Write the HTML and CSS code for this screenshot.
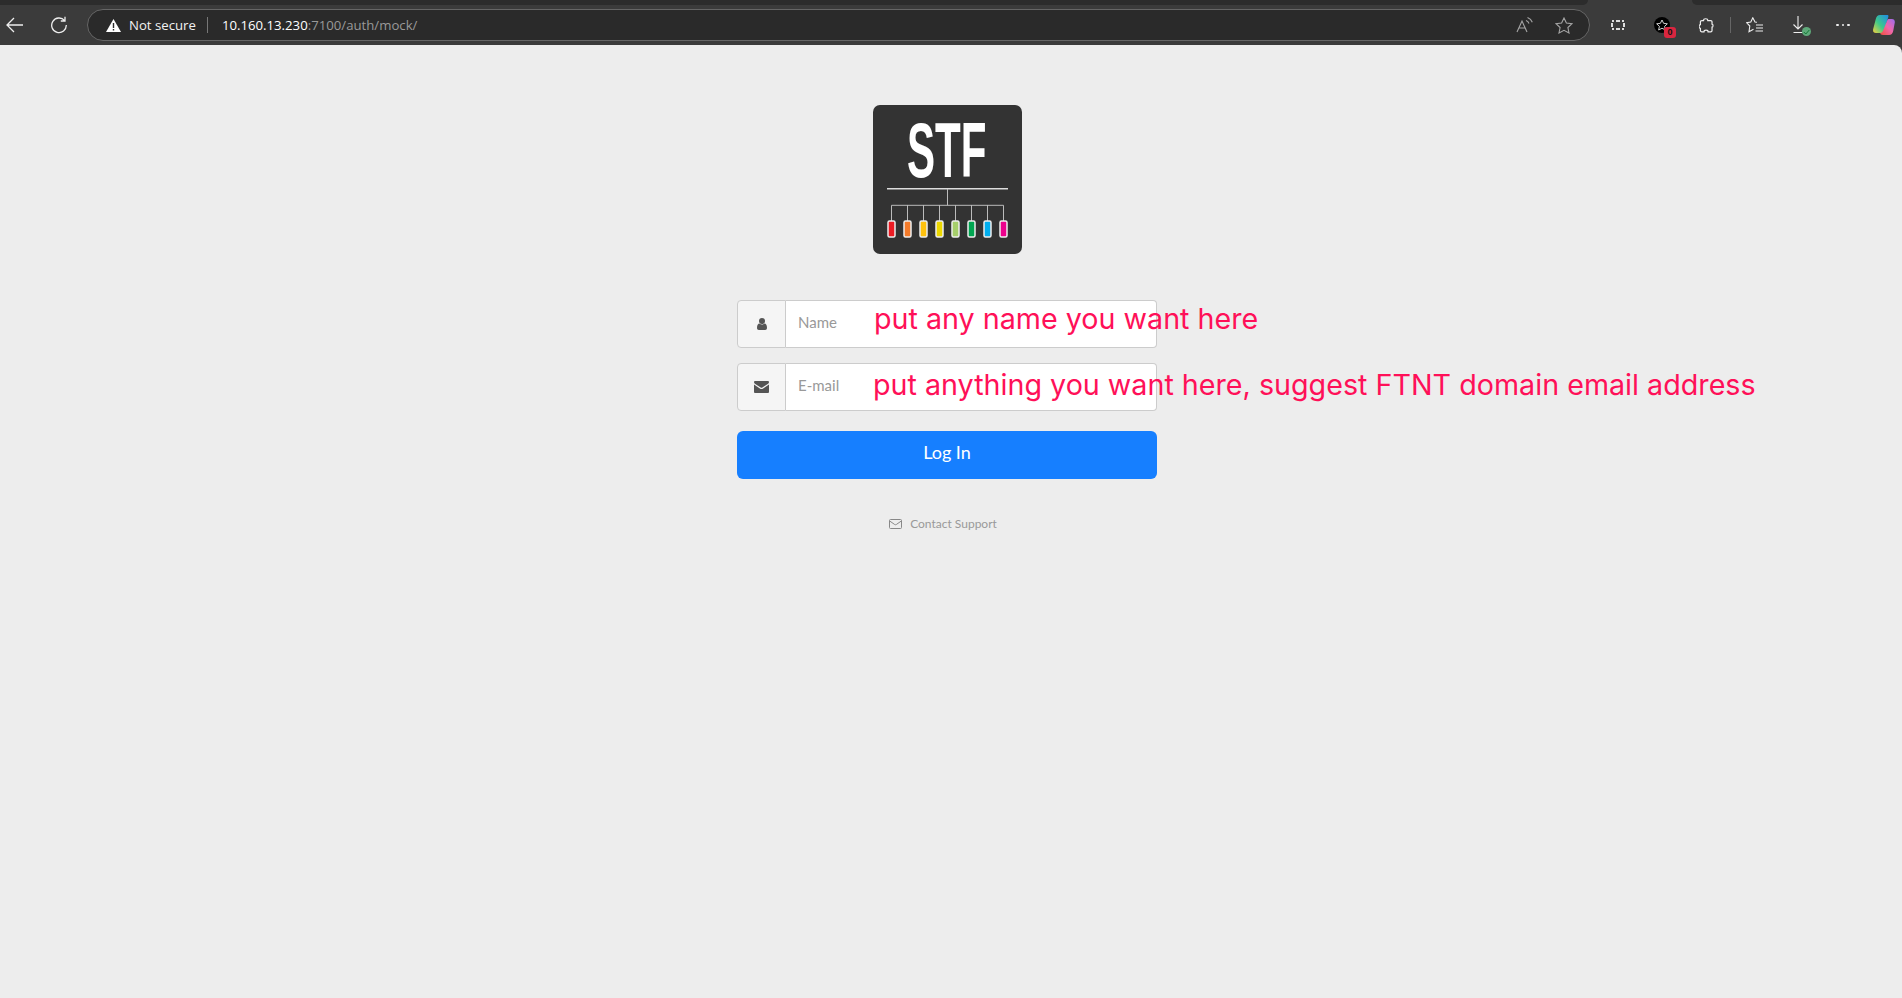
FILE: index.html
```html
<!DOCTYPE html>
<html lang="en">
<head>
<meta charset="utf-8">
<title>STF Login</title>
<link rel="stylesheet" href="styles.css">
</head>
<body>
<header class="chrome">
  <div class="tabstrip"><div class="strip-left"></div><div class="strip-gap"></div><div class="strip-right"></div></div>
  <div class="toolbar">
    <span class="tool tool-back"><svg width="18" height="16" viewBox="0 0 18 16"><path d="M8 1 1 8l7 7M1 8h16" class="ln"/></svg></span>
    <span class="tool tool-reload"><svg width="18" height="18" viewBox="0 0 18 18"><path d="M14.600 4.600A7.300 7.300 0 1 0 16.300 9M15 .8v4.200h-4.200" class="ln"/></svg></span>
    <div class="address">
      <svg class="warn" width="15" height="13" viewBox="0 0 15 13"><path d="M7.500 0 15 13H0z" fill="#fff"/><path d="M6.800 4h1.400v5H6.800zM6.800 10h1.400v1.500H6.800z" fill="#2a2a2a"/></svg>
      <span class="secure">Not secure</span>
      <span class="addr-sep"></span>
      <span class="url"><b>10.160.13.230</b>:7100/auth/mock/</span>
      <span class="addr-tools">
        <svg width="18" height="16" viewBox="0 0 18 16"><path d="M1 15 6 4l5 11M2.800 11h6.400M10 3.500c1.500.5 2.500 1.500 3 3M11.500 .5c2.300.8 4 2.500 4.800 4.800" class="ln thin dim"/></svg>
        <svg width="18" height="17" viewBox="0 0 18 17"><path d="m9 1 2.400 5 5.600.7-4.100 3.800 1.100 5.500L9 13.300 4 16l1.100-5.500L1 6.700 6.600 6z" class="ln thin dim"/></svg>
      </span>
    </div>
    <span class="tool t-tab"><svg width="14" height="10" viewBox="0 0 14 10"><path d="M1 0h2v2H1zM5 0h4v2H5zM11 0h2v2h-2zM0 3h2v4H0zM12 3h2v4h-2zM1 8h2v2H1zM5 8h4v2H5zM11 8h2v2h-2z" fill="#ddd"/></svg></span>
    <span class="tool t-ext">
      <span class="ext-disc"><svg width="12" height="12" viewBox="0 0 18 17"><path d="m9 1 2.400 5 5.600.7-4.100 3.800 1.100 5.500L9 13.300 4 16l1.100-5.500L1 6.700 6.600 6z" class="ln"/></svg></span>
      <span class="ext-badge">0</span>
    </span>
    <span class="tool t-puzzle"><svg width="15" height="15" viewBox="0 0 16 16"><path d="M4.800 2.800C4.800 1.500 5.900.8 7.100.8s2.300.7 2.300 2h3.200c.8 0 1.300.6 1.300 1.300v2.400c1.400 0 1.400 3.300 0 3.300v3.500c0 .8-.6 1.400-1.400 1.400h-2.800c0-2.300-4.400-2.300-4.400 0H3c-.9 0-1.500-.6-1.500-1.400v-2.200C-.4 10.800-.4 7 1.500 7V4.200c0-.8.600-1.400 1.500-1.400z" class="ln"/></svg></span>
    <span class="tool-sep"></span>
    <span class="tool t-fav"><svg width="18" height="16" viewBox="0 0 18 16"><path d="M11 5.300 9 5 6.800.8 4.800 5 .6 5.700 3.800 9 3 14.800l4.500-2.600M10 8h7M10 11h7M9.500 14h7.500" class="ln thin"/></svg></span>
    <span class="tool t-down"><svg width="12" height="18" viewBox="0 0 12 18"><path d="M6 0v13M1.500 8.500 6 13l4.500-4.500M1.500 16.500h9" class="ln thin"/></svg><span class="down-ok"><svg width="7" height="6" viewBox="0 0 7 6"><path d="m.8 3 2 2 3.500-4" class="tick"/></svg></span></span>
    <span class="tool t-more"><i></i><i></i><i></i></span>
    <span class="tool t-copilot"><svg width="22" height="20" viewBox="0 0 22 20">
      <defs>
        <linearGradient id="cpa" x1="0" y1="1" x2="1" y2="0"><stop offset="0" stop-color="#f4d03f"/><stop offset=".45" stop-color="#3ec98a"/><stop offset="1" stop-color="#1e8be8"/></linearGradient>
        <linearGradient id="cpb" x1="0" y1="1" x2="1" y2="0"><stop offset="0" stop-color="#f0503c"/><stop offset=".5" stop-color="#f067a8"/><stop offset="1" stop-color="#9a6bf0"/></linearGradient>
      </defs>
      <path d="M7 0h7c2 0 1.500 1.500 1 3L11 16c-.6 1.800-2 2-3.500 2H3c-2.500 0-3.300-1.800-2.800-4L2.800 4C3.500 1.500 4.800 0 7 0z" fill="url(#cpa)"/>
      <path d="M10 20h6c2.500 0 3.500-1.500 4.200-4l1.500-8c.5-2.300-.5-4-2.800-4H16c-1 0-1.500.5-1.800 1.500L10.300 15c-.7 2-1.500 3-3 3 0 1 1 2 2.700 2z" fill="url(#cpb)"/>
    </svg></span>
  </div>
</header>
<main class="page">
  <div class="login">
    <svg class="logo" width="149" height="149" viewBox="0 0 149 149">
      <rect width="149" height="149" rx="7" fill="#333"/>
      <text transform="translate(34 71.500) scale(.54 1)" class="logo-text">STF</text>
      <path d="M14 83.700h121" stroke="#ddd" stroke-width="1.500" fill="none"/>
      <path d="M74.500 84v16.300M18.500 116v-15.700h112V116M34.500 100v16M50.500 100v16M66.500 100v16M82.500 100v16M98.500 100v16M114.500 100v16" stroke="#bbb" fill="none"/>
      <g stroke="#eee" stroke-width="1.500">
        <rect x="15" y="116" width="7" height="16" rx="1.500" fill="#ed1c24"/>
        <rect x="31" y="116" width="7" height="16" rx="1.500" fill="#f47b2a"/>
        <rect x="47" y="116" width="7" height="16" rx="1.500" fill="#ffc20e"/>
        <rect x="63" y="116" width="7" height="16" rx="1.500" fill="#ecd800"/>
        <rect x="79" y="116" width="7" height="16" rx="1.500" fill="#a6ce6b"/>
        <rect x="95" y="116" width="7" height="16" rx="1.500" fill="#00a651"/>
        <rect x="111" y="116" width="7" height="16" rx="1.500" fill="#00aeef"/>
        <rect x="127" y="116" width="7" height="16" rx="1.500" fill="#ec008c"/>
      </g>
    </svg>
    <form class="login-form">
      <div class="group">
        <span class="addon"><svg width="10" height="12" viewBox="0 0 10 12"><circle cx="5" cy="3" r="3" fill="#555"/><path d="M0 10c0-3 1-4.500 2.500-4.500C3.300 6.200 4 6.500 5 6.500s1.700-.3 2.500-1C9 5.500 10 7 10 10c0 1.200-.8 2-1.800 2H1.800C.8 12 0 11.200 0 10z" fill="#555"/></svg></span>
        <input class="field" type="text" placeholder="Name">
        <span class="note note-name">put any name you want here</span>
      </div>
      <div class="group">
        <span class="addon"><svg width="15" height="12" viewBox="0 0 15 12"><path d="M1.200 0h12.600C14.500 0 15 .5 15 1.200c0 .6-.4 1.100-.9 1.500L8.300 6.600c-.5.300-1.100.3-1.600 0L.9 2.700C.4 2.300 0 1.800 0 1.200 0 .5.500 0 1.200 0zM0 3.600l6.200 4.100c.8.500 1.800.5 2.600 0L15 3.600v7.100c0 .7-.5 1.300-1.200 1.300H1.200C.5 12 0 11.400 0 10.700z" fill="#555"/></svg></span>
        <input class="field" type="text" placeholder="E-mail">
        <span class="note note-mail">put anything you want here, suggest FTNT domain email address</span>
      </div>
      <button class="login-btn" type="button">Log In</button>
    </form>
    <a class="contact"><svg width="13" height="10" viewBox="0 0 13 10"><path d="M1.500.5h10a1 1 0 0 1 1 1v7a1 1 0 0 1-1 1h-10a1 1 0 0 1-1-1v-7a1 1 0 0 1 1-1zM.7 2l5 3.500a1.500 1.500 0 0 0 1.600 0l5-3.500" fill="none" stroke="#888"/></svg>Contact Support</a>
  </div>
</main>
</body>
</html>
```
FILE: styles.css
```css
* { box-sizing: border-box; }
html, body { margin: 0; height: 100%; }
body {
  background: #3b3b3b;
  font-family: Lato, "Open Sans", sans-serif;
  overflow: hidden;
  display: flex;
  flex-direction: column;
}
.chrome { height: 45px; flex: none; background: #3b3b3b; }
.tabstrip { display: flex; height: 5px; }
.strip-left { width: 1588px; background: #2c2c2c; border-bottom-right-radius: 6px; }
.strip-gap { width: 104px; }
.strip-right { flex: 1; background: #2c2c2c; border-bottom-left-radius: 6px; }
.toolbar { display: flex; align-items: center; height: 40px; }
.tool { display: flex; align-items: center; justify-content: center; flex: none; height: 32px; }
.ln { fill: none; stroke: #eee; stroke-width: 1.300; }
.ln.thin { stroke-width: 1.100; }
.ln.dim { stroke: #a5a5a5; }
.tool-back { width: 30px; }
.tool-reload { width: 48px; margin-left: 3px; padding-left: 17px; justify-content: flex-start; }
.address {
  display: flex;
  flex: none;
  align-items: center;
  width: 1503px;
  height: 32px;
  margin-left: 6px;
  padding: 0 16px 0 18px;
  background: #2a2a2a;
  border: 1px solid #666;
  border-radius: 16px;
  font-family: "Open Sans", sans-serif;
  font-size: 13.200px;
}
.warn { flex: none; }
.secure { color: #f2f2f2; margin-left: 8px; }
.addr-sep { width: 1px; height: 16px; background: #777; margin: 0 14px 0 11px; }
.url { color: #999; }
.url b { color: #fff; font-weight: 400; }
.addr-tools { margin-left: auto; display: flex; gap: 21px; align-items: center; }
.t-tab { width: 56px; }
.t-ext { width: 32px; position: relative; }
.ext-disc { width: 16px; height: 16px; border-radius: 50%; background: #000; display: flex; align-items: center; justify-content: center; }
.ext-badge {
  position: absolute;
  left: 18px;
  top: 18px;
  width: 12px;
  height: 11px;
  border-radius: 3px;
  background: #d9263f;
  color: #111;
  font: 700 9px/11px "Liberation Sans", sans-serif;
  text-align: center;
}
.t-puzzle { width: 32px; margin-left: 12px; }
.tool-sep { width: 1px; height: 16px; background: #666; margin-left: 8px; flex: none; }
.t-fav { width: 32px; margin-left: 8px; }
.t-down { width: 32px; margin-left: 11px; position: relative; }
.down-ok {
  position: absolute;
  left: 20px;
  top: 18px;
  width: 9px;
  height: 9px;
  border-radius: 50%;
  background: #5fa97a;
  display: flex;
  align-items: center;
  justify-content: center;
}
.tick { fill: none; stroke: #173; stroke-width: 1; }
.t-more { width: 32px; margin-left: 13px; gap: 3px; }
.t-more i { width: 2.500px; height: 2.500px; border-radius: 50%; background: #eee; }
.t-copilot { width: 22px; margin-left: 14px; }
.page {
  flex: 1;
  background: #ededed;
  border-top-right-radius: 8px;
  display: flex;
  justify-content: center;
}
.login { width: 420px; display: flex; flex-direction: column; align-items: center; margin-right: 8px; padding-top: 60px; }
.logo { display: block; flex: none; }
.logo-text { font-family: "Liberation Sans", sans-serif; font-weight: 700; font-size: 78px; fill: #fff; }
.login-form { width: 420px; margin-top: 46px; display: flex; flex-direction: column; }
.group { position: relative; display: flex; height: 48px; margin-bottom: 15px; }
.addon {
  width: 49px;
  flex: none;
  display: flex;
  align-items: center;
  justify-content: center;
  background: #f5f5f5;
  border: 1px solid #ccc;
  border-radius: 4px 0 0 4px;
}
.field {
  flex: 1;
  min-width: 0;
  border: 1px solid #ccc;
  border-left: 0;
  border-radius: 0 4px 4px 0;
  background: #fff;
  padding: 0 12px 4px 12px;
  font: 15px Lato, sans-serif;
  outline: 0;
}
.field::placeholder { color: #999; opacity: 1; }
.note {
  position: absolute;
  white-space: nowrap;
  font-family: Inter, sans-serif;
  font-size: 28.700px;
  line-height: 36px;
  color: #ff1058;
}
.note-name { left: 137px; top: 1px; }
.note-mail { left: 136px; top: 4px; }
.login-btn {
  height: 48px;
  margin-top: 5px;
  border: 0;
  border-radius: 6px;
  background: #167fff;
  color: #fff;
  font: 18px Lato, sans-serif;
  padding-bottom: 8px;
}
.contact {
  margin-top: 37px;
  margin-right: 8px;
  display: flex;
  align-items: center;
  gap: 8px;
  color: #999;
  font-size: 12px;
  line-height: 16px;
}
```
